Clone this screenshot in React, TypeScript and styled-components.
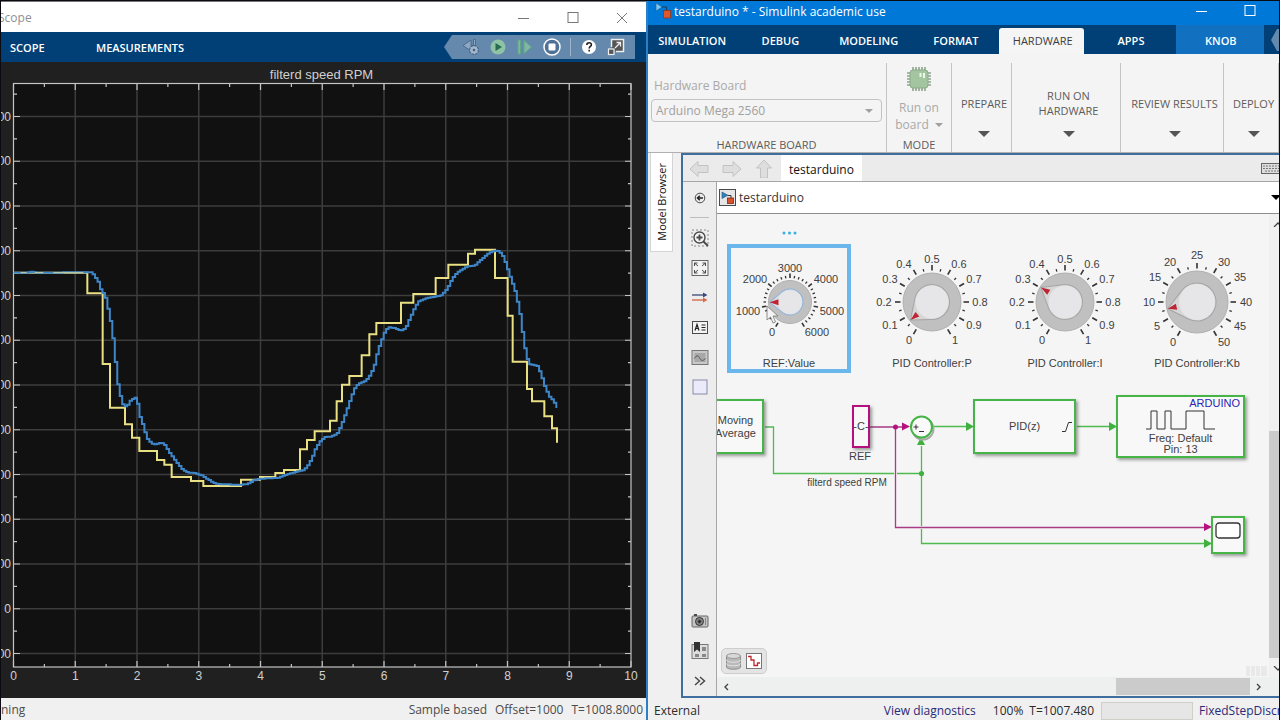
import React from "react";
import styled, { createGlobalStyle, css } from "styled-components";

const ui = `"Open Sans", "Noto Sans", sans-serif`;
const arial = `"Liberation Sans", Arial, sans-serif`;

const GlobalStyle = createGlobalStyle`
  * { box-sizing: border-box; }
  body { margin: 0; background: #000; font-family: ${ui}; font-size: 12px; }
  button, select, input { font: inherit; color: inherit; }
  button { border: 0; padding: 0; background: none; }
  svg { display: block; flex: none; }
`;

const Desktop = styled.div`
  display: flex;
  min-height: 100vh;
  padding: 1px 1px 0;
  background: #0b0b12;
`;

/* ---------- scope window ---------- */

const ScopeWindow = styled.section`
  flex: 645 1 0;
  min-width: 0;
  display: flex;
  flex-direction: column;
  overflow: hidden;
  background: #202020;
`;

const ScopeTitle = styled.header`
  height: 31px;
  display: flex;
  align-items: center;
  justify-content: space-between;
  background: #fff;
  color: #8f8f8f;
  line-height: 16px;
  padding: 1px 18px 0 0;
  border-top: 1px solid #777;
`;

const ScopeName = styled.span`
  margin-left: -3px;
`;

const WindowButtons = styled.div<{ $gap: number }>`
  display: flex;
  gap: ${(p) => p.$gap}px;
`;

const ScopeBar = styled.nav`
  height: 30px;
  display: flex;
  align-items: center;
  padding: 0 11px 0 9px;
  background: #004077;
`;

const ScopeTab = styled.button<{ $w: number }>`
  width: ${(p) => p.$w}px;
  text-align: left;
  color: #fff;
  font-size: 11px;
  font-weight: 600;
`;

const QuickTools = styled.div`
  margin-left: auto;
  height: 24px;
  display: flex;
  align-items: center;
  gap: 9px;
  padding: 0 10px 0 18px;
  background: #6489ad;
  clip-path: polygon(8px 0, 100% 0, 100% 100%, 8px 100%, 0 50%);
`;

const ToolDivider = styled.span`
  width: 1px;
  height: 18px;
  background: #9db4ca;
`;

const ChartArea = styled.main`
  flex: 1;
`;

const ScopeStatus = styled.footer`
  height: 22px;
  display: flex;
  align-items: center;
  gap: 8px;
  padding: 0 3px 0 0;
  background: #f0f0f0;
  color: #4c4c4c;
  font-size: 12px;
`;

const Spacer = styled.span`
  flex: 1;
`;

/* ---------- model window ---------- */

const ModelWindow = styled.section`
  flex: 631 1 0;
  min-width: 0;
  display: flex;
  flex-direction: column;
  overflow: hidden;
  border-left: 2px solid #2d7fc4;
  background: #f0f0f0;
`;

const ModelTitle = styled.header`
  height: 24px;
  display: flex;
  align-items: center;
  padding: 0 23px 4px 7px;
  gap: 2px;
  background: #0078d7;
  color: #fff;
`;

const TabStrip = styled.nav`
  height: 29px;
  display: flex;
  align-items: stretch;
  background: #004077;
  overflow: hidden;
`;

const RibbonTab = styled.button<{ $grow: number; $kind?: "active" | "context" }>`
  flex: ${(p) => p.$grow} 1 0;
  min-width: 0;
  padding: 2px 0 0 2px;
  color: #fff;
  font-size: 11px;
  font-weight: 600;
  ${(p) =>
    p.$kind === "active" &&
    css`
      margin-top: 3px;
      padding: 0 0 1px 2px;
      border-radius: 3px 3px 0 0;
      background: #f5f5f5;
      color: #3c3c3c;
      font-weight: 400;
    `}
  ${(p) => p.$kind === "context" && css`background: #1170c0;`}
`;

const TabEnd = styled.span`
  flex: 15 1 0;
  display: flex;
  align-items: center;
  justify-content: flex-end;
`;

const Ribbon = styled.div`
  height: 99px;
  display: flex;
  padding-top: 9px;
  background: #f4f4f4;
  border-bottom: 1px solid #b0b0b0;
  color: #5c5c5c;
  font-size: 11px;
  line-height: 15px;
`;

const BoardGroup = styled.div`
  flex: 231 1 0;
  min-width: 0;
  display: flex;
  flex-direction: column;
  padding: 15px 4px 0 3px;
  border-right: 1px solid #c4c4c4;
`;

const BoardLabel = styled.label`
  padding-left: 3px;
  color: #a9a9a9;
  font-size: 12px;
  line-height: 16px;
`;

const SelectBox = styled.div`
  position: relative;
  margin-top: 5px;

  svg {
    position: absolute;
    right: 9px;
    top: 10px;
    pointer-events: none;
  }
`;

const BoardSelect = styled.select`
  appearance: none;
  width: 100%;
  height: 23px;
  padding: 0 4px;
  border: 1px solid #c2c2c2;
  border-radius: 4px;
  background: #f4f4f4;
  color: #a0a0a0;
  opacity: 1;
  font-size: 12px;
`;

const GroupName = styled.span`
  margin-top: auto;
  text-align: center;
`;

const ModeGroup = styled.div`
  flex: 64 1 0;
  min-width: 0;
  display: flex;
  flex-direction: column;
  align-items: center;
  border-right: 1px solid #c4c4c4;
`;

const RunButton = styled.button`
  display: flex;
  flex-direction: column;
  align-items: center;
  gap: 7px;
  padding-top: 3px;
  color: #a9a9a9;
  font-size: 12px;
  line-height: 17px;
`;

const BoardLine = styled.span`
  display: flex;
  align-items: center;
  gap: 6px;
`;

const RibbonMenu = styled.button<{ $grow: number }>`
  flex: ${(p) => p.$grow} 1 0;
  min-width: 0;
  display: flex;
  flex-direction: column;
  align-items: center;
  padding-left: 5px;
  border-right: 1px solid #c4c4c4;
  font-size: 11px;
  line-height: 15px;
  white-space: nowrap;
`;

const MenuLabel = styled.span`
  height: 68px;
  padding-top: 12px;
  display: flex;
  align-items: center;
  text-align: center;
  white-space: pre-line;
`;

const Workspace = styled.div`
  flex: 1;
  display: flex;
`;

const BrowserRail = styled.aside`
  width: 33px;
  padding-left: 2px;
`;

const BrowserTab = styled.button`
  width: 23px;
  height: 99px;
  display: flex;
  align-items: center;
  justify-content: center;
  background: #fff;
  border: 1px solid #d4d4d4;
  border-top: 0;
  color: #111;
  font-size: 11px;

  span {
    writing-mode: vertical-rl;
    transform: rotate(180deg);
  }
`;

const Editor = styled.div`
  flex: 1;
  min-width: 0;
  display: flex;
  flex-direction: column;
  border: 2px solid #3f6e9e;
  border-right: 0;
`;

const EditorTabs = styled.div`
  height: 27px;
  display: flex;
  align-items: center;
  background: #ebebeb;
  border-bottom: 1px solid #a6a6a6;
`;

const ArrowRow = styled.div`
  width: 98px;
  display: flex;
  justify-content: space-between;
  padding: 2px 7px 0 6px;
`;

const EditorTab = styled.button`
  width: 81px;
  height: 26px;
  padding-top: 2px;
  align-self: flex-start;
  background: #fff;
  color: #111;
  font-size: 12px;
`;

const KeyboardSlot = styled.span`
  margin-left: auto;
  width: 18px;
  overflow: hidden;
`;

const EditorBody = styled.div`
  flex: 1;
  display: flex;
`;

const Palette = styled.div`
  width: 34px;
  display: flex;
  flex-direction: column;
  align-items: center;
  padding-top: 1px;
  background: #ededed;
  border-right: 1px solid #a6a6a6;
`;

const PaletteButton = styled.button`
  width: 33px;
  height: 30px;
  display: flex;
  align-items: center;
  justify-content: center;
`;

const PaletteRule = styled.hr`
  width: 19px;
  height: 1px;
  margin: 4px 0 5px;
  border: 0;
  background: #bdbdbd;
`;

const Document = styled.div`
  flex: 1;
  min-width: 0;
  display: flex;
  flex-direction: column;
`;

const Breadcrumb = styled.div`
  height: 32px;
  display: flex;
  align-items: center;
  gap: 3px;
  padding-left: 2px;
  background: #fff;
  border-bottom: 1px solid #8e8e8e;
  color: #333;
  font-size: 12px;

  svg:last-child {
    margin-left: auto;
  }
`;

const CanvasRow = styled.div`
  flex: 1;
  display: flex;
`;

const Canvas = styled.div`
  position: relative;
  flex: 1;
  min-width: 0;
  min-height: 463px;
  overflow: hidden;
  background: #f5f5f5;
  font-family: ${arial};
  font-size: 11px;
  line-height: 13px;
  color: #404040;
`;

const VScroll = styled.div`
  width: 10px;
  display: flex;
  flex-direction: column;
  align-items: flex-end;
  padding: 8px 0 6px;
  background: #f0f0f0;
`;

const VThumb = styled.div`
  width: 10px;
  height: 227px;
  margin: auto 0 8px;
  background: #cbcbcb;
`;

const HScroll = styled.div`
  height: 19px;
  display: flex;
  align-items: center;
  padding: 0 17px 0 6px;
  background: #eeefef;
`;

const HThumb = styled.div`
  width: 134px;
  height: 17px;
  margin: 0 6px 0 auto;
  background: #cbcbcb;
`;

const ModelStatus = styled.footer`
  height: 22px;
  display: flex;
  align-items: center;
  padding: 4px 0 0 6px;
  color: #2b2b2b;
  font-size: 12px;
  line-height: 16px;
  white-space: nowrap;
  overflow: hidden;
`;

const StatusLink = styled.a`
  color: #2a2a78;
  text-decoration: none;
`;

const StatusValue = styled.span<{ $before: number; $after: number }>`
  margin-left: ${(p) => p.$before}px;
  margin-right: ${(p) => p.$after}px;
`;

const StatusSlot = styled.span`
  width: 92px;
  height: 18px;
  margin-right: 6px;
  background: #e6e6e6;
  border: 1px solid #cfcfc8;
`;

const SolverSlot = styled.span`
  width: 80px;
  overflow: hidden;
`;

/* ---------- canvas items ---------- */

type Box = { $x: number; $y: number; $w: number; $h: number };

const node = css<Box>`
  position: absolute;
  left: ${(p) => p.$x}px;
  top: ${(p) => p.$y}px;
  width: ${(p) => p.$w}px;
  height: ${(p) => p.$h}px;
`;

const Block = styled.div<Box & { $color?: string; $top?: boolean }>`
  ${node}
  display: flex;
  flex-direction: column;
  align-items: center;
  justify-content: ${(p) => (p.$top ? "flex-start" : "center")};
  text-align: center;
  white-space: nowrap;
  border: 2px solid ${(p) => p.$color || "#46b446"};
  background: #f8f8f8;
  box-shadow: 2px 2px 3px rgba(60, 70, 60, 0.5);
`;

const Caption = styled.span<Box & { $small?: boolean }>`
  ${node}
  text-align: center;
  white-space: nowrap;
  ${(p) => p.$small && css`font-size: 10px;`}
`;

const KnobFrame = styled.figure<Box & { $selected?: boolean }>`
  ${node}
  margin: 0;
  display: flex;
  flex-direction: column;
  align-items: center;
  ${(p) => p.$selected && css`border: 4px solid #6bb7ec;`}

  figcaption {
    margin-top: 1px;
    white-space: nowrap;
  }
`;

const Wires = styled.svg`
  position: absolute;
  left: 0;
  top: 0;
`;

const Overlay = styled.span<Box>`
  ${node}
`;

const LoggingPill = styled.div<Box>`
  ${node}
  display: flex;
  align-items: center;
  justify-content: center;
  gap: 5px;
  border: 1px solid #cdcdcd;
  border-radius: 5px;
  background: #e4e4e4;
`;

const BlockTag = styled.span`
  align-self: flex-end;
  padding-right: 3px;
  color: #2b1fb4;
`;

const BlockText = styled.span`
  margin-top: 3px;
  line-height: 11px;
`;

/* ---------- chart ---------- */

const STEP = 61.75;
const ROW = 44.75;

/* Traces are stored in thirds of a pixel, relative to (0, 240). */
const reference: [number, number][] = [
  [41, 98], [262, 160], [308, 372], [330, 503], [375, 553], [396, 593], [418, 633], [471, 660], [493, 674],
  [515, 711], [573, 723], [610, 738], [723, 719], [780, 711], [826, 699], [852, 690], [900, 628], [921, 600],
  [944, 574], [990, 542], [1010, 484], [1026, 434], [1048, 408], [1085, 346], [1108, 283], [1129, 249],
  [1203, 188], [1240, 162], [1307, 114], [1345, 74], [1404, 41], [1425, 29], [1485, 114], [1523, 227],
  [1538, 365], [1581, 447], [1596, 484], [1633, 529], [1656, 565], [1671, 608],
];

const filtered: [number, number][] = [
  [41, 98], [80, 98], [92, 95], [104, 98], [270, 97], [278, 103], [286, 115], [293, 126], [300, 148], [308, 160],
  [316, 175], [323, 210], [331, 250], [338, 302], [345, 372], [352, 435], [360, 472], [368, 498], [378, 500],
  [388, 483], [403, 472], [410, 485], [418, 530], [427, 555], [435, 583], [442, 600], [455, 611], [465, 613],
  [480, 608], [492, 614], [500, 627], [510, 643], [520, 657], [532, 672], [545, 688], [560, 697], [582, 699],
  [603, 706], [620, 717], [640, 729], [660, 733], [715, 734], [740, 733], [760, 720], [780, 716], [830, 714],
  [850, 706], [890, 694], [910, 690], [925, 672], [935, 650], [945, 625], [960, 602], [975, 590], [990, 590],
  [1010, 580], [1020, 560], [1035, 520], [1050, 475], [1065, 438], [1080, 428], [1095, 423], [1110, 402],
  [1120, 380], [1132, 330], [1140, 308], [1152, 275], [1163, 262], [1180, 264], [1200, 272], [1215, 264],
  [1225, 240], [1240, 208], [1252, 185], [1280, 174], [1320, 167], [1338, 148], [1355, 115], [1370, 97],
  [1400, 79], [1422, 77], [1440, 60], [1460, 42], [1480, 32], [1495, 33], [1508, 50], [1520, 85], [1532, 120],
  [1544, 155], [1557, 215], [1566, 280], [1575, 340], [1585, 372], [1610, 378], [1620, 400], [1632, 438],
  [1645, 468], [1660, 485], [1671, 508],
];

const stepPath = (pts: [number, number][]) =>
  pts.map(([x, y], i) => (i === 0 ? `M${x} ${y}` : `H${x}V${y}`)).join("");

const resample = (pts: [number, number][], dx: number) => {
  const out: [number, number][] = [];
  let k = 0;
  for (let x = pts[0][0]; x <= pts[pts.length - 1][0]; x += dx) {
    while (k < pts.length - 2 && pts[k + 1][0] < x) k++;
    const [x0, y0] = pts[k];
    const [x1, y1] = pts[k + 1];
    out.push([x, Math.round(y0 + ((y1 - y0) * (x - x0)) / (x1 - x0))]);
  }
  return out;
};

function ScopeChart() {
  const cols = Array.from({ length: 11 }, (_, i) => 13.5 + i * STEP);
  const rows = Array.from({ length: 13 }, (_, i) => 116.5 + i * ROW);
  const halfRows = Array.from({ length: 13 }, (_, i) => 94.1 + i * ROW);
  return (
    <svg viewBox="1 62 645 636" width="100%" role="img" aria-label="filterd speed RPM">
      <rect x="13.5" y="83.5" width="617.5" height="583.5" fill="#111" />
      <g stroke="#3d3d3d" strokeWidth="1.5">
        {cols.slice(1, 10).map((x) => <path key={x} d={`M${x} 84V667`} />)}
        {rows.map((y) => <path key={y} d={`M14 ${y}H631`} />)}
      </g>
      <g stroke="#c4c4c4" strokeWidth="1.2">
        {cols.map((x) => <path key={x} d={`M${x} 84v6M${x} 667v-6`} />)}
        {cols.slice(0, 10).map((x) => <path key={x} d={`M${x + STEP / 2} 84v3M${x + STEP / 2} 667v-3`} />)}
        {rows.map((y) => <path key={y} d={`M14 ${y}h6M631 ${y}h-6`} />)}
        {halfRows.map((y) => <path key={y} d={`M14 ${y}h3M631 ${y}h-3`} />)}
        <rect x="13.5" y="83.5" width="617.5" height="583.5" fill="none" />
      </g>
      <g transform="translate(0 240) scale(0.33333)" fill="none" strokeWidth="6">
        <path d={stepPath(reference)} stroke="#e9df83" />
        <path d={stepPath(resample(filtered, 7.4))} stroke="#3f86c8" />
        <path d="M62 98H80M104 98H130M160 98H250" stroke="#c9d3a6" strokeWidth="3" />
      </g>
      <g fill="#d0d0d0" fontFamily={arial} fontSize="12">
        <text x="321.5" y="79" fontSize="13" textAnchor="middle">filterd speed RPM</text>
        {cols.map((x, i) => <text key={x} x={x} y="680" textAnchor="middle">{i}</text>)}
        {rows.map((y, i) => (
          <text key={y} x="11" y={y + 4} textAnchor="end">{i === 11 ? "0" : "00"}</text>
        ))}
      </g>
    </svg>
  );
}

/* ---------- knobs ---------- */

type Label = [string, number, number];

const unitLabels: Label[] = [
  ["0", -23, 38], ["0.1", -42, 23], ["0.2", -48, 0], ["0.3", -42, -23], ["0.4", -28, -38], ["0.5", 0, -43],
  ["0.6", 27, -38], ["0.7", 42, -23], ["0.8", 48, 0], ["0.9", 42, 23], ["1", 23, 38],
];
const gainLabels: Label[] = [
  ["0", -24, 40], ["5", -40, 24], ["10", -48, 0], ["15", -42, -25], ["20", -27, -40], ["25", 0, -47],
  ["30", 27, -40], ["35", 43, -25], ["40", 49, 0], ["45", 43, 24], ["50", 27, 40],
];
const refLabels: Label[] = [
  ["0", -18, 30], ["1000", -42, 9], ["2000", -35, -23], ["3000", 0, -34], ["4000", 36, -23], ["5000", 42, 9],
  ["6000", 27, 30],
];

type KnobProps = { r: number; cap: number; angle: number; minor: number; labels: Label[]; selected?: boolean };

function KnobDial({ r, cap, angle, minor, labels, selected }: KnobProps) {
  const count = (labels.length - 1) * minor;
  const long = selected ? 7 : 8;
  const short = 5;
  const t = Math.acos(cap / (r - 1));
  const tx = cap * Math.sin(t);
  const ty = -cap * Math.cos(t);
  return (
    <svg width="116" height="108" viewBox={selected ? "-59 -54 116 108" : "-58 -54 116 108"} aria-hidden="true">
      {Array.from({ length: count + 1 }, (_, i) => {
        const major = i % minor === 0;
        return (
          <path
            key={i}
            d={`M0 ${-(r + 2.5)}V${-(r + (major ? long : short))}`}
            transform={`rotate(${-150 + (300 * i) / count})`}
            stroke="#333"
            strokeWidth={major ? 1.6 : 1.3}
          />
        );
      })}
      <circle r={r} fill="#c0c0c0" stroke="#b0b0b0" />
      <g transform={`rotate(${angle})`}>
        <path
          d={`M0 ${-(r - 1)}L${tx} ${ty}A${cap} ${cap} 0 1 1 ${-tx} ${ty}Z`}
          fill={selected ? "#d9dde2" : "#d6d6d6"}
          stroke={selected ? "#8fb4dc" : "#a4a4a4"}
        />
        <circle r={cap - 1} fill="#e6e6e8" />
        <path d={`M0 ${-(r - 1)}L3 ${-(r - 10)}L-3 ${-(r - 10)}Z`} fill="#bf2433" />
      </g>
      <g fontFamily={arial} fontSize="11" fill="#404040" textAnchor="middle">
        {labels.map(([s, x, y]) => <text key={s} x={x} y={y + 4}>{s}</text>)}
      </g>
    </svg>
  );
}

/* ---------- icons ---------- */

const Caret = ({ color = "#555", w = 12 }: { color?: string; w?: number }) => (
  <svg width={w} height={w / 2} viewBox="0 0 12 6"><path d="M0 0h12L6 6z" fill={color} /></svg>
);

const Minimize = ({ color }: { color: string }) => (
  <svg width="12" height="12" viewBox="0 0 12 12"><path d="M0 6.5h11" stroke={color} /></svg>
);
const Maximize = ({ color }: { color: string }) => (
  <svg width="12" height="12" viewBox="0 0 12 12"><rect x="1" y=".5" width="10" height="10" fill="none" stroke={color} /></svg>
);

const AppIcon = () => (
  <svg width="17" height="17" viewBox="0 0 17 17">
    <path d="M1 0l6 4-6 4z" fill="#7cc8f2" stroke="#1b5f96" strokeWidth=".6" />
    <path d="M7 4h4.500v3" fill="none" stroke="#1d3b5a" />
    <rect x="8.500" y="7.500" width="7" height="7.500" fill="#e2562c" stroke="#8a3a22" strokeWidth=".8" />
  </svg>
);

const ModelIcon = () => (
  <svg width="17" height="17" viewBox="0 0 17 17">
    <rect x=".5" y=".5" width="16" height="16" fill="#e6e6e6" stroke="#4a4a4a" />
    <path d="M3 3l6 3.300L3 9.500z" fill="#2f83bd" stroke="#1d567f" strokeWidth=".6" />
    <path d="M9 6.500h3v3" fill="none" stroke="#333" />
    <rect x="8.500" y="9" width="6" height="5.500" fill="#d9512c" stroke="#7c2a14" strokeWidth=".8" />
  </svg>
);

const NavArrow = ({ turn }: { turn: number }) => (
  <svg width="20" height="18" viewBox="0 0 20 18">
    <path d="M1 9l8-7.500v4h10v7H9v4z" transform={`rotate(${turn} 10 9)`} fill="#dedede" stroke="#c2c2c2" />
  </svg>
);

const chipPins = [7, 10, 13, 16, 19];

const Chip = () => (
  <svg width="26" height="26" viewBox="0 0 26 26">
    <path d={chipPins.map((p) => `M${p} 1v24M1 ${p}h24`).join("")} stroke="#8fa38e" strokeWidth="1.6" />
    <rect x="4" y="4" width="18" height="18" rx="3" fill="#a3c6a1" stroke="#8bab89" />
    <path d="M14.500 7v4M18 7v5" stroke="#eef7ed" strokeWidth="2" />
  </svg>
);

const Stroke = ({ children, size = 18 }: { children: React.ReactNode; size?: number }) => (
  <svg width={size} height={size} viewBox="0 0 18 18" fill="none" stroke="#4a4a4a">{children}</svg>
);

const paletteTop: [string, React.ReactNode][] = [
  ["Zoom", <Stroke><rect x="1" y="1" width="16" height="16" stroke="#888" strokeDasharray="2 2" /><circle cx="8.500" cy="8.500" r="5.500" fill="#f4f4f4" strokeWidth="1.400" /><path d="M8.500 5.500v6M5.500 8.500h6M12.500 12.500l4.500 4.500" strokeWidth="1.800" /></Stroke>],
  ["Fit to view", <Stroke><rect x="1" y="1.500" width="16" height="15" fill="#f4f4f4" stroke="#666" /><path d="M3.500 7V4h3M3.500 4l3.500 3M14.500 7V4h-3M14.500 4L11 7M3.500 11v3h3M3.500 14L7 11M14.500 11v3h-3M14.500 14L11 11" /></Stroke>],
  ["Signals", <Stroke><path d="M1 6h12" stroke="#3a4a78" strokeWidth="1.300" /><path d="M1 11h12" stroke="#d8694a" strokeWidth="1.400" /><path d="M12 3.500L16.500 6 12 8.500z" fill="#3a4a78" stroke="none" /><path d="M12 8.500l4.500 2.500-4.500 2.500z" fill="#d8694a" stroke="none" /></Stroke>],
  ["Annotation", <Stroke><rect x="1.500" y="2.500" width="15" height="12" fill="#f4f4f4" /><path d="M4 11.500l2-6 2 6M4.500 9.500h3M10.500 6h4M10.500 8.500h4M10.500 11h4" strokeWidth="1.200" stroke="#222" /></Stroke>],
  ["Image", <Stroke><rect x="1" y="1.500" width="16" height="14" fill="#c8c8c8" stroke="#777" /><rect x="3.500" y="4" width="11" height="9" fill="#a8a8a8" stroke="none" /><path d="M3.500 9.500c2-4 4-3 5.500 0s3.500 2 5.500 0" stroke="#555" /></Stroke>],
  ["Area", <Stroke><rect x="2" y="1" width="14" height="14" fill="#eaeafa" stroke="#8a8aa8" /></Stroke>],
];

const paletteBottom: [string, React.ReactNode][] = [
  ["Screenshot", <Stroke><rect x="1" y="4" width="16" height="11" rx="1" fill="#c4c4c4" stroke="#666" /><path d="M3 3h3" strokeWidth="2" /><circle cx="8.500" cy="9.500" r="4" fill="#888" stroke="#333" /><circle cx="8.500" cy="9.500" r="1.500" fill="#222" /><path d="M14.500 6v7" stroke="#888" /></Stroke>],
  ["Bookmarks", <Stroke><rect x="1" y="2.500" width="16" height="14" fill="#ddd" stroke="#777" /><path d="M3 0h6v10L6 7.500 3 10z" fill="#333" stroke="none" /><path d="M11 5h4v4h-4zM4 12h4v3H4zM11 12h4v3h-4z" fill="#888" stroke="none" /></Stroke>],
  ["More", <Stroke><path d="M4 5l4.500 4L4 13M9 5l4.500 4L9 13" strokeWidth="1.500" /></Stroke>],
];

const pulse = "M0 19h5V1h6v18h8V1h6v18h15V1h18v18h11";

/* ---------- page ---------- */

function Scope() {
  return (
    <ScopeWindow>
      <ScopeTitle>
        <ScopeName>Scope</ScopeName>
        <WindowButtons $gap={37}>
          <button aria-label="Minimize"><Minimize color="#777" /></button>
          <button aria-label="Maximize"><Maximize color="#777" /></button>
          <button aria-label="Close">
            <svg width="12" height="12" viewBox="0 0 12 12"><path d="M1 1l10 10M11 1L1 11" stroke="#777" /></svg>
          </button>
        </WindowButtons>
      </ScopeTitle>
      <ScopeBar>
        <ScopeTab $w={86}>SCOPE</ScopeTab>
        <ScopeTab $w={100}>MEASUREMENTS</ScopeTab>
        <QuickTools>
          <button aria-label="Step back options">
            <svg width="18" height="18" viewBox="0 0 18 18">
              <path d="M9 2v11L1 7.500zM11.500 1.500h2V8h-2z" fill="#8fa6c0" stroke="#3f6288" strokeWidth=".8" />
              <circle cx="12" cy="12" r="4" fill="#a3b6ca" stroke="#3f6288" strokeDasharray="2 1.100" strokeWidth="2" />
              <circle cx="12" cy="12" r="3.800" fill="#a3b6ca" />
              <circle cx="12" cy="12" r="1.300" fill="#3f6288" />
            </svg>
          </button>
          <button aria-label="Run">
            <svg width="18" height="18" viewBox="0 0 18 18"><circle cx="9" cy="9" r="7.500" fill="#8fc3a6" /><path d="M6.500 5l6.500 4-6.500 4z" fill="#276b52" /></svg>
          </button>
          <button aria-label="Step forward">
            <svg width="18" height="18" viewBox="0 0 18 18"><path d="M2 2h2.500v14H2zM8 2.500l7.500 6.500L8 15.500z" fill="#83b5a4" stroke="#5fa685" /></svg>
          </button>
          <button aria-label="Stop">
            <svg width="18" height="18" viewBox="0 0 18 18"><circle cx="9" cy="9" r="8" fill="#4e7195" stroke="#fff" strokeWidth="1.500" /><rect x="5.500" y="5.500" width="7" height="7" rx="1" fill="#fff" /></svg>
          </button>
          <ToolDivider />
          <button aria-label="Help">
            <svg width="18" height="18" viewBox="0 0 18 18">
              <circle cx="9" cy="9" r="7" fill="#fff" />
              <path d="M6.800 7c0-3 4.600-3 4.600-.3 0 1.700-2.200 1.700-2.200 3.800M9.200 11.700v1.700" fill="none" stroke="#222" strokeWidth="1.600" />
            </svg>
          </button>
          <button aria-label="Undock">
            <svg width="18" height="18" viewBox="0 0 18 18">
              <path d="M4.500 9V1.500h12v12H9" fill="#555" stroke="#eee" strokeWidth="1.500" />
              <rect x="1.500" y="11" width="5.500" height="5.500" fill="#555" stroke="#eee" strokeWidth="1.200" />
              <path d="M8 10l5-5M9.500 4.500H13.500V8.500" fill="none" stroke="#eee" strokeWidth="1.300" />
            </svg>
          </button>
        </QuickTools>
      </ScopeBar>
      <ChartArea><ScopeChart /></ChartArea>
      <ScopeStatus>
        <span>ning</span>
        <Spacer />
        <span>Sample based</span>
        <span>Offset=1000</span>
        <span>T=1008.8000</span>
      </ScopeStatus>
    </ScopeWindow>
  );
}

const tabs: { name: string; grow: number; kind?: "active" | "context" }[] = [
  { name: "SIMULATION", grow: 84 },
  { name: "DEBUG", grow: 88 },
  { name: "MODELING", grow: 84 },
  { name: "FORMAT", grow: 86 },
  { name: "HARDWARE", grow: 83, kind: "active" },
  { name: "APPS", grow: 89 },
  { name: "KNOB", grow: 86, kind: "context" },
];

function ModelCanvas() {
  return (
    <Canvas>
      <Wires width="552" height="463" viewBox="717 214 552 463" fill="none" aria-hidden="true">
        <g stroke="#4fbb4f" strokeWidth="1.300">
          <path d="M765 427H773.500V473.500H921.500M921.500 446V543.500H1206M934 426.500H968M1077 426.500H1112" />
          <path d="M895.500 468V479M916 527.500H927" stroke="#f5f5f5" strokeWidth="3" />
        </g>
        <path d="M869 427H905M895.500 427V527.500H1206" stroke="#a83a86" strokeWidth="1.300" />
        <circle cx="895.500" cy="427" r="2.500" fill="#b5107e" />
        <circle cx="921.500" cy="473.500" r="2.600" fill="#3fb13f" />
        <path d="M902 422.500l8 4-8 4zM1204 523l8 4-8 4z" fill="#b5107e" />
        <path d="M966 422l8 4.500-8 4.500zM1109 422l8 4.500-8 4.500zM1204 539l8 4.500-8 4.500zM917 445l4-8 4 8z" fill="#3fb13f" />
        <g fill="#36b2dc"><circle cx="784" cy="233" r="1.500" /><circle cx="789.500" cy="233" r="1.500" /><circle cx="795" cy="233" r="1.500" /></g>
      </Wires>

      <KnobFrame $x={10} $y={30} $w={124} $h={129} $selected>
        <KnobDial r={21.5} cap={13} angle={-91} minor={5} labels={refLabels} selected />
        <figcaption>REF:Value</figcaption>
      </KnobFrame>
      <KnobFrame $x={157} $y={34} $w={116} $h={124}>
        <KnobDial r={29} cap={17.5} angle={-130} minor={2} labels={unitLabels} />
        <figcaption>PID Controller:P</figcaption>
      </KnobFrame>
      <KnobFrame $x={290} $y={34} $w={116} $h={124}>
        <KnobDial r={29} cap={17.5} angle={-59} minor={2} labels={unitLabels} />
        <figcaption>PID Controller:I</figcaption>
      </KnobFrame>
      <KnobFrame $x={422} $y={34} $w={116} $h={124}>
        <KnobDial r={31} cap={19} angle={-103} minor={2} labels={gainLabels} />
        <figcaption>PID Controller:Kb</figcaption>
      </KnobFrame>

      <Overlay $x={49} $y={91} $w={14} $h={20}>
        <svg width="14" height="20" viewBox="0 0 14 20">
          <path d="M1 1v14l3.500-3 2.500 6 2.500-1-2.500-6H12z" fill="#f4f4f4" stroke="#777" strokeWidth=".8" />
        </svg>
      </Overlay>

      <Block $x={-10} $y={185} $w={57} $h={55}><span>Moving<br />Average</span></Block>
      <Block $x={135} $y={191} $w={18} $h={43} $color="#b5107e"><span>-C-</span></Block>
      <Caption $x={123} $y={236} $w={40} $h={13}>REF</Caption>
      <Overlay $x={192} $y={200} $w={28} $h={28}>
        <svg width="28" height="28" viewBox="0 0 28 28">
          <circle cx="14" cy="15" r="10.500" stroke="#aaa" strokeWidth="2" fill="none" />
          <circle cx="12.500" cy="13" r="10.500" fill="#fafafa" stroke="#46b446" strokeWidth="2" />
          <path d="M4.500 13h5M7 10.500v5M10 17.500h5" stroke="#333" />
        </svg>
      </Overlay>
      <Caption $x={90} $y={262} $w={80} $h={13} $small>filterd speed RPM</Caption>
      <Block $x={256} $y={185} $w={103} $h={55}><span>PID(z)</span></Block>
      <Overlay $x={344} $y={207} $w={12} $h={12}>
        <svg width="12" height="12" viewBox="0 0 12 12"><path d="M1 10.500h3.500L7.500 1.500H11" fill="none" stroke="#333" /></svg>
      </Overlay>
      <Block $x={399} $y={181} $w={129} $h={63} $top>
        <BlockTag>ARDUINO</BlockTag>
        <svg width="69" height="20" viewBox="0 0 69 20"><path d={pulse} fill="none" stroke="#333" /></svg>
        <BlockText>Freq: Default<br />Pin: 13</BlockText>
      </Block>
      <Block $x={494} $y={302} $w={34} $h={38}>
        <svg width="26" height="26" viewBox="0 0 26 26"><rect x="1" y="1" width="24" height="15" rx="3" fill="#fff" stroke="#333" strokeWidth="1.300" /></svg>
      </Block>

      <LoggingPill $x={4} $y={434} $w={46} $h={26}>
        <svg width="15" height="17" viewBox="0 0 15 17">
          <path d="M.5 3v11c0 3 14 3 14 0V3z" fill="#b9b9b9" stroke="#8f8f8f" />
          <ellipse cx="7.500" cy="3" rx="7" ry="2.500" fill="#d8d8d8" stroke="#999" />
          <path d="M.5 7c0 3 14 3 14 0M.5 10.500c0 3 14 3 14 0" fill="none" stroke="#e4e4e4" />
        </svg>
        <svg width="16" height="16" viewBox="0 0 16 16">
          <rect x=".5" y=".5" width="15" height="15" fill="#fff" stroke="#777" />
          <path d="M2 3.500h3V7h3v5.500h3.500V10H14" fill="none" stroke="#c0272d" strokeWidth="1.300" />
        </svg>
      </LoggingPill>
      <Overlay $x={529} $y={452} $w={21} $h={10}>
        <svg width="21" height="10" viewBox="0 0 21 10"><path d="M0 0h4v10H0zM5 0h4v10H5zM10 0h4v10h-4zM15 0h6v10h-6z" fill="#e9e9e9" /></svg>
      </Overlay>
    </Canvas>
  );
}

function Model() {
  return (
    <ModelWindow>
      <ModelTitle>
        <AppIcon />
        <span>testarduino * - Simulink academic use</span>
        <Spacer />
        <WindowButtons $gap={36}>
          <button aria-label="Minimize"><Minimize color="#fff" /></button>
          <button aria-label="Maximize"><Maximize color="#fff" /></button>
        </WindowButtons>
      </ModelTitle>
      <TabStrip>
        {tabs.map((t) => (
          <RibbonTab key={t.name} $grow={t.grow} $kind={t.kind}>{t.name}</RibbonTab>
        ))}
        <TabEnd>
          <svg width="8" height="22" viewBox="0 0 8 22"><path d="M8 0H6L0 11l6 11h2z" fill="#6489ad" /></svg>
        </TabEnd>
      </TabStrip>
      <Ribbon>
        <BoardGroup>
          <BoardLabel htmlFor="board">Hardware Board</BoardLabel>
          <SelectBox>
            <BoardSelect id="board" disabled><option>Arduino Mega 2560</option></BoardSelect>
            <Caret color="#a0a0a0" w={8} />
          </SelectBox>
          <GroupName>HARDWARE BOARD</GroupName>
        </BoardGroup>
        <ModeGroup>
          <RunButton>
            <Chip />
            <span>Run on<BoardLine>board <Caret color="#a0a0a0" w={8} /></BoardLine></span>
          </RunButton>
          <GroupName>MODE</GroupName>
        </ModeGroup>
        <RibbonMenu $grow={54}><MenuLabel>PREPARE</MenuLabel><Caret /></RibbonMenu>
        <RibbonMenu $grow={103}><MenuLabel>{"RUN ON\nHARDWARE"}</MenuLabel><Caret /></RibbonMenu>
        <RibbonMenu $grow={97}><MenuLabel>REVIEW RESULTS</MenuLabel><Caret /></RibbonMenu>
        <RibbonMenu $grow={49}><MenuLabel>DEPLOY</MenuLabel><Caret /></RibbonMenu>
      </Ribbon>
      <Workspace>
        <BrowserRail><BrowserTab><span>Model Browser</span></BrowserTab></BrowserRail>
        <Editor>
          <EditorTabs>
            <ArrowRow>
              <button aria-label="Back"><NavArrow turn={0} /></button>
              <button aria-label="Forward"><NavArrow turn={180} /></button>
              <button aria-label="Up"><NavArrow turn={90} /></button>
            </ArrowRow>
            <EditorTab>testarduino</EditorTab>
            <KeyboardSlot>
              <svg width="26" height="11" viewBox="0 0 26 11">
                <rect x=".5" y=".5" width="25" height="10" fill="#ddd" stroke="#666" />
                <path d="M2 3h22M2 5.500h22M4 8h18" stroke="#777" strokeDasharray="2 1" />
              </svg>
            </KeyboardSlot>
          </EditorTabs>
          <EditorBody>
            <Palette>
              <PaletteButton aria-label="Hide browser">
                <Stroke><circle cx="9" cy="9" r="4.800" /><path d="M6.500 9h5.500M8.800 6.800L6.500 9l2.300 2.200" strokeWidth="1.500" stroke="#222" /></Stroke>
              </PaletteButton>
              <PaletteRule />
              {paletteTop.map(([n, icon]) => <PaletteButton key={n} aria-label={n}>{icon}</PaletteButton>)}
              <Spacer />
              {paletteBottom.map(([n, icon]) => <PaletteButton key={n} aria-label={n}>{icon}</PaletteButton>)}
            </Palette>
            <Document>
              <Breadcrumb>
                <ModelIcon />
                <span>testarduino</span>
                <svg width="8" height="5" viewBox="0 0 8 5"><path d="M0 0h10L5 5z" fill="#000" /></svg>
              </Breadcrumb>
              <CanvasRow>
                <ModelCanvas />
                <VScroll>
                  <svg width="6" height="5" viewBox="0 0 6 5"><path d="M1 5l4-4 4 4" fill="none" stroke="#444" strokeWidth="1.300" /></svg>
                  <VThumb />
                  <svg width="6" height="5" viewBox="0 0 6 5"><path d="M1 0l4 4 4-4" fill="none" stroke="#444" strokeWidth="1.300" /></svg>
                </VScroll>
              </CanvasRow>
              <HScroll>
                <svg width="6" height="8" viewBox="0 0 6 8"><path d="M5 1L2 4l3 3" fill="none" stroke="#444" strokeWidth="1.400" /></svg>
                <HThumb />
                <svg width="6" height="8" viewBox="0 0 6 8"><path d="M1 1l3 3-3 3" fill="none" stroke="#444" strokeWidth="1.400" /></svg>
              </HScroll>
            </Document>
          </EditorBody>
        </Editor>
      </Workspace>
      <ModelStatus>
        <span>External</span>
        <Spacer />
        <StatusLink href="#diagnostics">View diagnostics</StatusLink>
        <StatusValue $before={17} $after={6}>100%</StatusValue>
        <StatusValue $before={0} $after={7}>T=1007.480</StatusValue>
        <StatusSlot />
        <SolverSlot><StatusLink href="#solver">FixedStepDiscrete</StatusLink></SolverSlot>
      </ModelStatus>
    </ModelWindow>
  );
}

export default function App() {
  return (
    <>
      <GlobalStyle />
      <Desktop>
        <Scope />
        <Model />
      </Desktop>
    </>
  );
}
